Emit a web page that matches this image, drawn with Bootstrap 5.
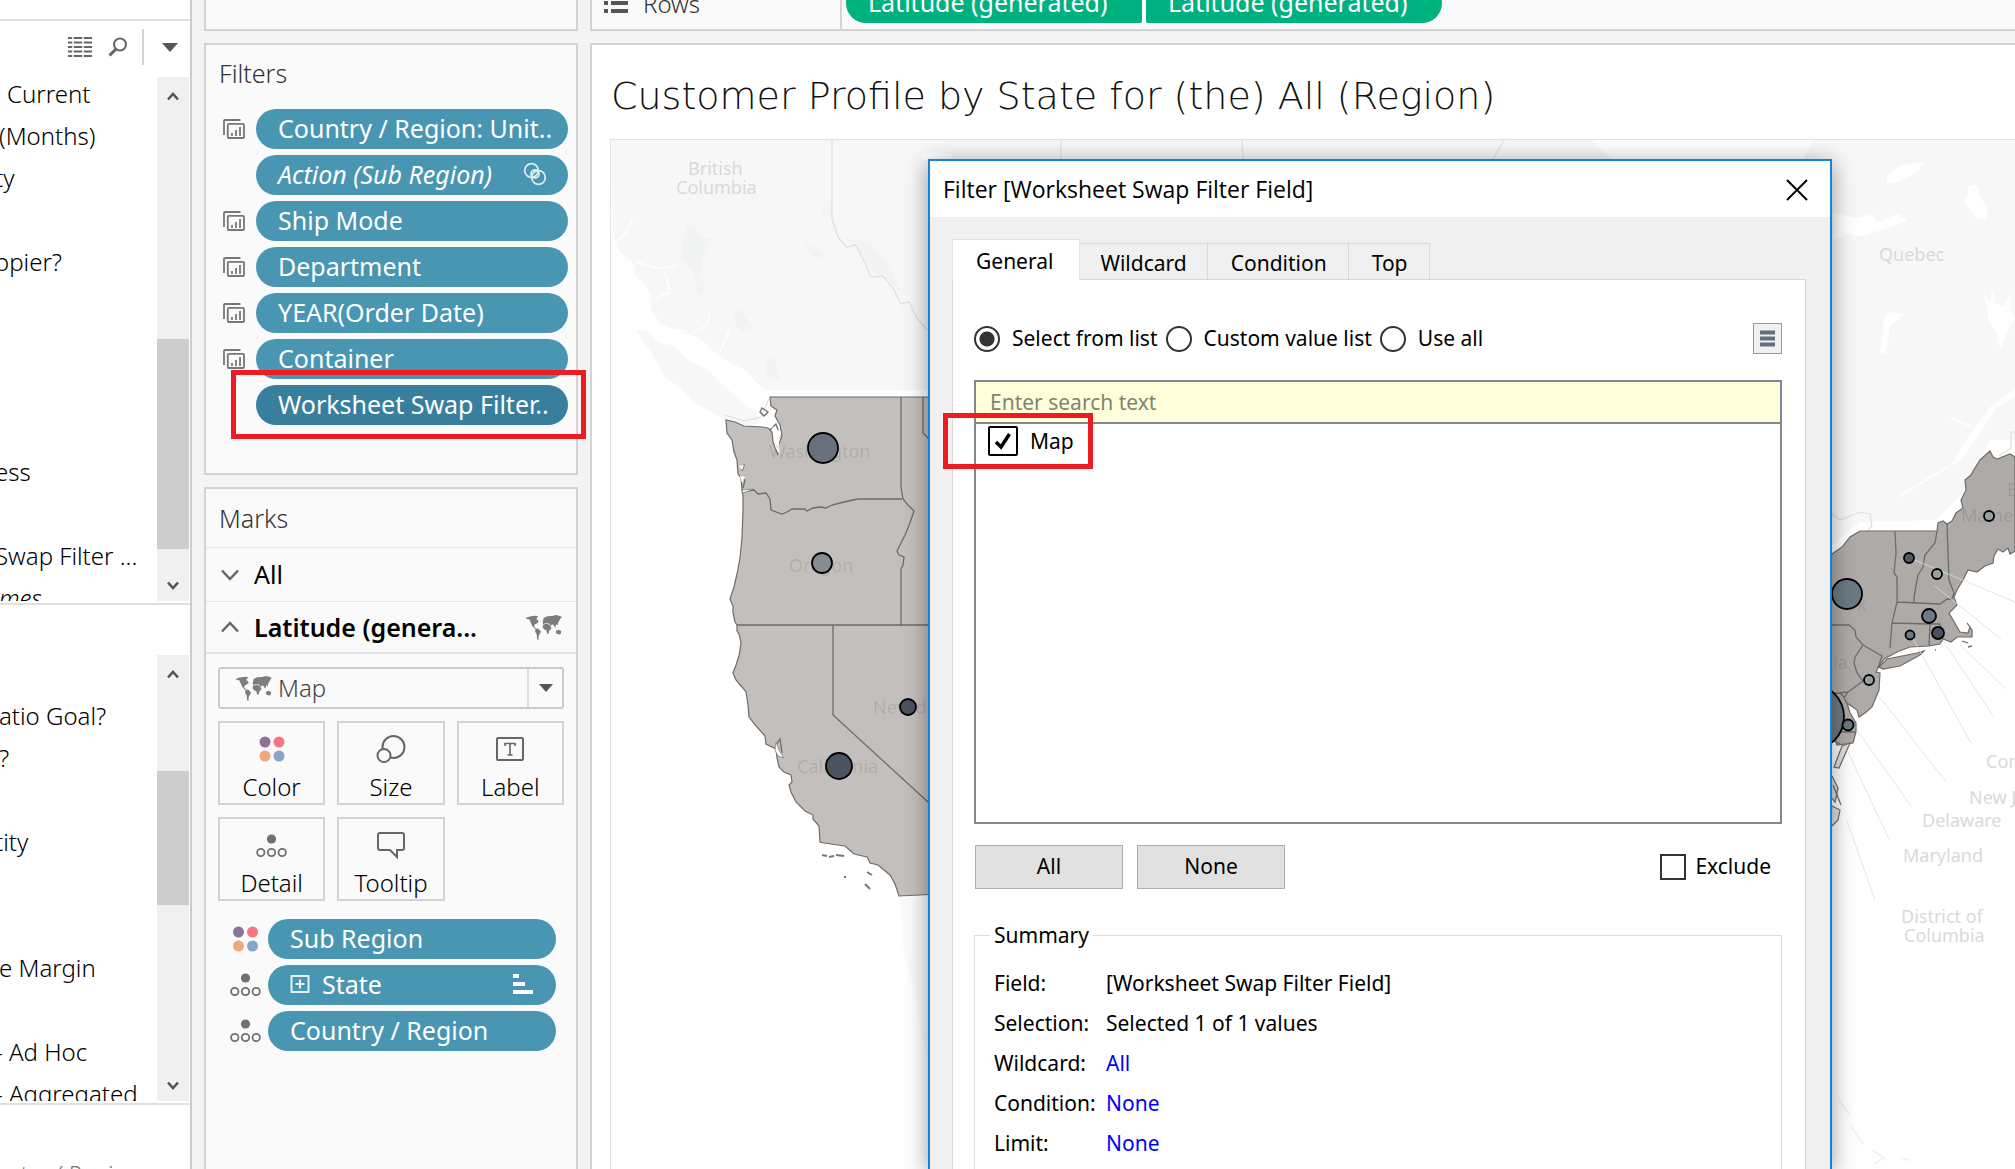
<!DOCTYPE html>
<html lang="en">
<head>
<meta charset="utf-8">
<meta name="viewport" content="width=device-width, initial-scale=1">
<title>Customer Profile - Worksheet</title>
<link href="https://cdn.jsdelivr.net/npm/bootstrap@5.3.0/dist/css/bootstrap.min.css" rel="stylesheet">
<style>
  body { font-family: "Noto Sans", "Open Sans", sans-serif; font-size: 24px; color: #000; background: #f4f4f4; }
  .workspace { height: 100vh; }

  /* data pane */
  .data-pane { width: 192px; background: #fff; border-right: 2px solid #ccc; }
  .pane-top { height: 21px; border-bottom: 2px solid #e0e0e0; }
  .pane-tools { height: 52px; padding: 8px 12px 8px 0; }
  .pane-tools .tool { color: #666; line-height: 0; }
  .tool-split { width: 2px; height: 36px; background: #d3d3d3; margin: 0 18px 0 14px; }
  .scroll-pane { height: 532px; border-bottom: 2px solid #e0e0e0; padding: 0 1px 2px 0; }
  .measures { height: 450px; margin-top: 50px; }
  .field-list { font-weight: 300; line-height: 42px; white-space: nowrap; margin: 0 0 0 -5px; }
  .measures .field-list { padding-top: 40px; }
  .field-list li { min-height: 42px; }
  .field-list .first-field { padding-left: 12px; }
  .track { width: 32px; background: #f0f0f0; color: #555; padding: 14px 0 10px; }
  .thumb-gap { flex: 0 0 238px; }
  .thumb { flex: 0 0 210px; background: #cdcdcd; }
  .measures .thumb-gap { flex-basis: 92px; }
  .measures .thumb { flex-basis: 134px; }
  .sets-list { padding-top: 48px; font-weight: 300; font-style: italic; color: #777; line-height: 42px; margin-left: -36px; }

  /* shelves */
  .shelves { width: 398px; padding: 0 12px; }
  .shelf { background: #fafafa; border: 2px solid #d3d3d3; }
  .shelf-top { height: 31px; border-top: 0; }
  .shelf-head { font-size: 25px; line-height: 54px; font-weight: 300; color: #333; padding-left: 13px; margin: 0; }
  .filter-shelf { margin-top: 12px; height: 432px; padding-top: 1px; }
  .pill-list { gap: 6px; }
  .pill-row { gap: 11px; }
  .pill-row > svg { flex: none; }
  .filter-shelf .pill-list { padding: 9px 8px 0 17px; }
  .pill { height: 40px; border: 0; border-radius: 20px; background: #4996b2; color: #fff; font-size: 25px; font-weight: 400; line-height: 38px; padding: 0 15px 2px 22px; text-align: left; white-space: nowrap; }
  .pill-wide-end { padding-right: 21px; }
  .pill-active { background: #387f9e; }
  .callout { position: absolute; border: 5px solid #ed1c24; pointer-events: none; }
  .callout-filter { left: 25px; right: -10px; top: 325px; height: 69px; }

  .marks-shelf { margin-top: 12px; border-bottom: 0; }
  .marks-shelf .shelf-head { line-height: 58px; border-bottom: 1px solid #e3e3e3; }
  .mark-layer { border: 0; border-bottom: 1px solid #e3e3e3; background: none; padding: 0 14px 0 15px; gap: 15px; font-size: 25px; font-weight: 400; line-height: 53px; text-align: left; }
  .mark-layer-on { font-weight: 600; line-height: 50px; border-bottom-width: 2px; }
  .mark-body { padding: 13px 12px 0 12px; }
  .mark-type { border: 2px solid #ccc; border-radius: 3px; height: 42px; padding-left: 16px; }
  .mark-type select { appearance: none; border: 0; background: none; color: #444; font-weight: 300; line-height: 34px; padding: 0 0 0 6px; outline: 0; }
  .mark-type .caret-cell { width: 35px; border-left: 2px solid #ddd; line-height: 0; }
  .mark-grid { display: grid; grid-template-columns: repeat(3, 1fr); gap: 12px; margin-top: 12px; }
  .mark-btn { height: 84px; border: 2px solid #d3d3d3; background: #fafafa; font-weight: 300; padding: 12px 0 0; line-height: 40px; }
  .mark-btn svg { display: block; margin: 0 auto 4px; }
  .mark-pills { padding: 18px 20px 0 24px; }
  .mark-pills .pill-row { gap: 7px; }
  .expand-box { margin-right: 12px; }

  /* rows shelf and sheet */
  .rows-shelf { height: 31px; border-right: 0; border-top: 0; padding-bottom: 6px; }
  .rows-label { width: 248px; padding-left: 12px; gap: 15px; font-weight: 300; color: #333; line-height: 37px; height: 40px; }
  .rows-wrap { border-left: 2px solid #d3d3d3; padding-left: 4px; gap: 4px; margin-bottom: -6px; padding-bottom: 6px; }
  .pill-green { background: #00b180; width: 296px; }
  .pill-first { border-radius: 20px 2px 2px 20px; }
  .pill-last { border-radius: 2px 20px 20px 2px; }
  .sheet { margin-top: 12px; background: #fff; border: 2px solid #d3d3d3; border-right: 0; border-bottom: 0; padding-left: 18px; }
  .sheet-title { font-family: "DejaVu Sans", sans-serif; font-size: 38px; font-weight: 200; line-height: 86px; color: #111; margin: 0; padding: 8px 0 0 1px; white-space: nowrap; }
  .map { display: block; width: 100%; height: auto; }
  .map-names text { font-size: 18px; fill: #d8dad9; }
  .map-names .on-state { fill: #000; fill-opacity: .11; }

  /* filter window */
  .filter-window { position: absolute; left: 928px; top: 159px; bottom: 0; width: 904px; border: 2px solid #1883d7; border-bottom: 0; background: #f0f0f0; box-shadow: 0 4px 22px rgba(0,0,0,.4); font-size: 21px; }
  .window-bar { height: 56px; background: #fff; padding: 2px 21px 0 13px; }
  .window-bar h2 { font-family: "Open Sans", sans-serif; font-size: 23px; font-weight: 400; margin: 0; }
  .window-bar button { border: 0; background: none; padding: 0; line-height: 0; }
  .window-body { padding: 22px 24px 0 22px; }
  .filter-tabs { border: 0; align-items: flex-end; }
  .filter-tabs .nav-link { border: 1px solid #d9d9d9; border-left-width: 0; border-radius: 0; background: #f0f0f0; color: #000; line-height: 35px; padding: 2px 20px 0; margin: 0; height: 37px; }
  .filter-tabs .nav-link.active { border-left-width: 1px; border-bottom: 0; background: #fff; height: 41px; line-height: 36px; padding: 2px 26px 0 23px; color: #000; position: relative; }
  .filter-tabs .tab-wide { padding-left: 23px; padding-right: 21px; }
  .tab-panel { background: #fff; border: 1px solid #d9d9d9; border-bottom: 0; margin-top: -1px; padding: 43px 23px 0 21px; }
  .choice { gap: 12px; margin-right: 8px; }
  .choice input { appearance: none; width: 26px; height: 26px; margin: 0; border: 2px solid #333; border-radius: 50%; background: #fff; }
  .choice input:checked { background: radial-gradient(circle, #333 7px, #fff 8px); }
  .menu-btn { width: 29px; height: 31px; border: 1px solid #999; background: #f0f0f0; padding: 0; line-height: 0; }
  .value-box { margin-top: 25px; border: 2px solid #828790; height: 444px; }
  .value-box .form-control { height: 42px; border: 0; border-bottom: 2px solid #828790; border-radius: 0; background: #ffffdb; font-size: 21px; padding: 0 14px; box-shadow: none; }
  .value-box .form-control::placeholder { color: #83836f; opacity: 1; }
  .value-item { padding: 2px 0 0 12px; gap: 12px; }
  .value-item input { appearance: none; width: 30px; height: 30px; margin: 0; border: 2px solid #000; border-radius: 2px; background: #fff; }
  .tick { position: absolute; left: 18px; top: 8px; pointer-events: none; }
  .callout-value { left: -33px; top: 31px; width: 150px; height: 56px; }
  .list-actions { margin-top: 21px; gap: 14px; padding-left: 1px; }
  .grey-btn { width: 148px; height: 44px; border: 1px solid #adadad; background: #e1e1e1; color: #000; padding: 0; }
  .exclude { gap: 9px; padding-right: 11px; }
  .exclude input { appearance: none; width: 26px; height: 26px; margin: 0; border: 2px solid #333; background: #fff; }
  .summary { border: 1px solid #dcdcdc; border-bottom: 0; margin-top: 33px; padding: 0 0 0 15px; }
  .summary legend { float: none; width: auto; font-size: 21px; line-height: 27px; margin: 0; padding: 0 4px; }
  .summary dl { display: grid; grid-template-columns: 112px 1fr; line-height: 40px; margin: 14px 0 0; padding-left: 4px; }
  .summary dt { font-weight: 400; }
  .summary dd { margin: 0; }
  .summary a { color: #00f; text-decoration: none; }
</style>
<script src="https://cdn.jsdelivr.net/npm/bootstrap@5.3.0/dist/js/bootstrap.bundle.min.js"></script>
</head>
<body class="overflow-hidden">

<svg width="0" height="0" class="position-absolute" aria-hidden="true">
  <symbol id="i-context" viewBox="0 0 22 20"><path d="M1 16V2q0-1 1-1h15.500" fill="none" stroke="#777" stroke-width="1.800"/><rect x="4.800" y="4.800" width="16.200" height="14.200" rx="1" fill="none" stroke="#777" stroke-width="1.800"/><path d="M9 17v-3M13 17v-6M17 17V8" stroke="#777" stroke-width="1.800"/></symbol>
  <symbol id="i-world" viewBox="0 0 108 76"><g fill="#7d7d7d"><path d="M0 8l8-3 12-2 10-1 6 2-3 5-3 3 5 3 3 6-6 5-6 3-2 6 7 6h-5l-8-8-5-12-4-8-9-1z"/><path d="M28 42l8-1 9 9-4 8-3 6-1 12-4-2-1-15-5-8z"/><path d="M51 18l2-9 11-5 14-1 14-3 16 5-5 8-6 10-1 8-5-3-3 11-6-9-4-2-3 6-6-8-10-2-7 4-2-5z"/><path d="M51 30l11-4 10 5 5 9-7 8-2 8-4 2-3-12-7-3-4-6z"/><path d="M90 49l8-4 8 4-1 9-6 1-8-3z"/></g></symbol>
  <symbol id="i-detail" viewBox="0 0 31 24"><circle cx="15.500" cy="5" r="4.600" fill="#707070"/><g fill="none" stroke="#707070" stroke-width="1.800"><circle cx="4.800" cy="18.500" r="3.700"/><circle cx="15.500" cy="18.500" r="3.700"/><circle cx="26.200" cy="18.500" r="3.700"/></g></symbol>
  <symbol id="i-color" viewBox="0 0 26 26"><circle cx="6" cy="6" r="5.500" fill="#8a7399"/><circle cx="20" cy="6" r="5.500" fill="#f87683"/><circle cx="6" cy="20" r="5.500" fill="#f1a77c"/><circle cx="20" cy="20" r="5.500" fill="#85a5cb"/></symbol>
  <symbol id="i-up" viewBox="0 0 12 10"><path d="M1 8.500L6 3l5 5.500" fill="none" stroke="#555" stroke-width="2.600"/></symbol>
  <symbol id="i-down" viewBox="0 0 12 10"><path d="M1 1.500L6 7l5-5.500" fill="none" stroke="#555" stroke-width="2.600"/></symbol>
</svg>

<div class="workspace d-flex overflow-hidden">

  <aside class="data-pane flex-shrink-0 overflow-hidden">
    <div class="pane-top"></div>
    <div class="pane-tools d-flex justify-content-end align-items-center">
      <span class="tool"><svg width="24" height="20"><path d="M0 1h24M0 5.500h24M0 10h24M0 14.500h24M0 19h24" stroke="#666" stroke-width="2" fill="none"/><path d="M5 0v20M15 0v20" stroke="#fff" stroke-width="1.500"/></svg></span>
      <span class="tool ms-3"><svg width="20" height="20"><circle cx="12" cy="7.500" r="6" fill="none" stroke="#666" stroke-width="2"/><path d="M8 12L1.500 18.500" stroke="#666" stroke-width="3"/></svg></span>
      <span class="tool-split"></span>
      <span class="tool"><svg width="16" height="9"><path d="M0 0h16L8 9z" fill="#555"/></svg></span>
    </div>

    <section class="scroll-pane d-flex" aria-label="Dimensions">
      <ul class="field-list list-unstyled flex-grow-1 overflow-hidden">
        <li class="first-field">Current</li>
        <li class="ps-1">(Months)</li>
        <li>ty</li>
        <li></li>
        <li>opier?</li>
        <li></li><li></li><li></li><li></li>
        <li>ess</li>
        <li></li>
        <li>Swap Filter ...</li>
        <li class="fst-italic ps-1">mes</li>
      </ul>
      <div class="track d-flex flex-column align-items-center flex-shrink-0 mt-1">
        <svg width="12" height="10"><use href="#i-up"/></svg>
        <div class="thumb-gap"></div><div class="thumb w-100"></div>
        <svg class="mt-auto" width="12" height="10"><use href="#i-down"/></svg>
      </div>
    </section>

    <section class="scroll-pane measures d-flex" aria-label="Measures">
      <ul class="field-list list-unstyled flex-grow-1 overflow-hidden">
        <li class="ps-1">atio Goal?</li>
        <li class="ps-1">?</li>
        <li></li>
        <li>tity</li>
        <li></li><li></li>
        <li class="ps-1">e Margin</li>
        <li></li>
        <li>- Ad Hoc</li>
        <li>- Aggregated</li>
      </ul>
      <div class="track d-flex flex-column align-items-center flex-shrink-0">
        <svg width="12" height="10"><use href="#i-up"/></svg>
        <div class="thumb-gap flex-shrink-0"></div><div class="thumb w-100"></div>
        <svg class="mt-auto" width="12" height="10"><use href="#i-down"/></svg>
      </div>
    </section>
    <div class="sets-list text-nowrap">Country / Region</div>
  </aside>

  <div class="shelves flex-shrink-0 d-flex flex-column">
    <div class="shelf shelf-top flex-shrink-0"></div>

    <section class="shelf filter-shelf position-relative flex-shrink-0">
      <h2 class="shelf-head">Filters</h2>
      <div class="pill-list d-flex flex-column">
        <div class="pill-row d-flex align-items-center"><svg width="22" height="20"><use href="#i-context"/></svg><button class="pill flex-grow-1">Country / Region: Unit..</button></div>
        <div class="pill-row d-flex align-items-center"><svg width="22" height="20"></svg><button class="pill pill-wide-end flex-grow-1 d-flex justify-content-between align-items-center"><em>Action (Sub Region)</em><svg width="24" height="24" fill="none" stroke="#dcebf1" stroke-width="1.800"><circle cx="8.500" cy="8.500" r="6.800"/><circle cx="15.500" cy="15.500" r="6.800"/><circle cx="12" cy="12" r="4"/></svg></button></div>
        <div class="pill-row d-flex align-items-center"><svg width="22" height="20"><use href="#i-context"/></svg><button class="pill flex-grow-1">Ship Mode</button></div>
        <div class="pill-row d-flex align-items-center"><svg width="22" height="20"><use href="#i-context"/></svg><button class="pill flex-grow-1">Department</button></div>
        <div class="pill-row d-flex align-items-center"><svg width="22" height="20"><use href="#i-context"/></svg><button class="pill flex-grow-1">YEAR(Order Date)</button></div>
        <div class="pill-row d-flex align-items-center"><svg width="22" height="20"><use href="#i-context"/></svg><button class="pill flex-grow-1">Container</button></div>
        <div class="pill-row d-flex align-items-center"><svg width="22" height="20"></svg><button class="pill pill-active flex-grow-1">Worksheet Swap Filter..</button></div>
      </div>
      <div class="callout callout-filter"></div>
    </section>

    <section class="shelf marks-shelf flex-grow-1">
      <h2 class="shelf-head">Marks</h2>
      <button class="mark-layer w-100 d-flex align-items-center"><svg width="18" height="12" fill="none" stroke="#666" stroke-width="2.500"><path d="M1 1.500l8 8.500 8-8.500"/></svg>All</button>
      <button class="mark-layer mark-layer-on w-100 d-flex align-items-center"><svg width="18" height="12" fill="none" stroke="#666" stroke-width="2.500"><path d="M1 10.500L9 2l8 8.500"/></svg>Latitude (genera...<svg class="ms-auto" width="36" height="25"><use href="#i-world"/></svg></button>
      <div class="mark-body">
        <div class="mark-type d-flex align-items-center">
          <svg class="flex-shrink-0" width="36" height="25"><use href="#i-world"/></svg>
          <select class="flex-grow-1" aria-label="Mark type"><option>Map</option></select>
          <span class="caret-cell h-100 d-flex align-items-center justify-content-center"><svg width="14" height="8"><path d="M0 0h14L7 8z" fill="#555"/></svg></span>
        </div>
        <div class="mark-grid">
          <button class="mark-btn"><svg width="26" height="28"><use href="#i-color"/></svg>Color</button>
          <button class="mark-btn"><svg width="30" height="28" fill="none" stroke="#666" stroke-width="2"><circle cx="17.500" cy="12" r="11"/><circle cx="8" cy="20.500" r="6.500" fill="#fafafa"/></svg>Size</button>
          <button class="mark-btn"><svg width="28" height="28"><rect x="1" y="3" width="26" height="22" rx="1" fill="none" stroke="#666" stroke-width="2"/><path d="M9 11V8.500h10V11M14 8.500V20M11.500 20h5" fill="none" stroke="#666" stroke-width="1.600"/></svg>Label</button>
          <button class="mark-btn"><svg width="31" height="28" viewBox="0 -3 31 28"><use href="#i-detail" width="31" height="24"/></svg>Detail</button>
          <button class="mark-btn"><svg width="28" height="28" fill="none" stroke="#666" stroke-width="2"><path d="M3 2h22q2 0 2 2v13q0 2-2 2h-5v7l-7-7H3q-2 0-2-2V4q0-2 2-2z"/></svg>Tooltip</button>
        </div>
      </div>
      <div class="mark-pills pill-list d-flex flex-column">
        <div class="pill-row d-flex align-items-center"><svg width="31" height="26"><use href="#i-color"/></svg><button class="pill flex-grow-1">Sub Region</button></div>
        <div class="pill-row d-flex align-items-center"><svg width="31" height="24"><use href="#i-detail"/></svg><button class="pill pill-wide-end flex-grow-1 d-flex align-items-center"><svg width="20" height="20" class="expand-box" fill="none" stroke="#e6f1f5" stroke-width="2"><path d="M1.500 2h17v16h-17zM10 5.500v9M5.500 10h9"/></svg>State<svg width="22" height="22" class="ms-auto" stroke="#fff" stroke-width="4"><path d="M0 3h6M0 11h12M0 19h20"/></svg></button></div>
        <div class="pill-row d-flex align-items-center"><svg width="31" height="24"><use href="#i-detail"/></svg><button class="pill flex-grow-1">Country / Region</button></div>
      </div>
    </section>
  </div>

  <main class="flex-grow-1 d-flex flex-column overflow-hidden">
    <div class="shelf rows-shelf d-flex align-items-end flex-shrink-0">
      <div class="rows-label d-flex align-items-center flex-shrink-0"><svg width="24" height="20" stroke="#555" stroke-width="4"><path d="M0 2h4M7 2h17M0 10h4M7 10h17M0 18h4M7 18h17"/></svg>Rows</div>
      <div class="rows-wrap d-flex">
        <button class="pill pill-green pill-first">Latitude (generated)</button>
        <button class="pill pill-green pill-last">Latitude (generated)</button>
      </div>
    </div>

    <div class="sheet flex-grow-1 overflow-hidden">
      <h1 class="sheet-title">Customer Profile by State for (the) All (Region)</h1>
      <svg class="map" viewBox="610 139 1405 1030" role="img" aria-label="Map of customers by state">
        <rect x="610" y="139" width="1405" height="1030" fill="#fff"/>
        <!-- Canada and Baja California -->
        <g fill="#f7f7f7">
          <path d="M612 140H2015V440L1990 440 1965 490 1936 520 1860 522 1832 545 1800 390H770L762 388 745 370 728 362 712 350 700 338 680 332 662 325 652 313 650 295 643 282 636 277 632 262 620 252 613 235z"/>
          <path d="M636 330l12 2 10 10 16 4 14 14 20 10 16 16 18 16 14 10 4 10-8 4-14-3-16-4-14-9-14-8-14-14-16-12-8-16z"/>
        </g>
        <path d="M900 899l28-3v160l-8-30-6-40-10-30z" fill="#fbfbfb"/>
        <!-- parks -->
        <g fill="#f2f4f3">
          <path d="M686 224l10 2 4 12 14 0-10 16-4 20 6 18-8 2-6-24-12-12zM845 238l24 4 20 24 14 28-16-14-12-6-16-22zM735 308l8 4 10 16-10 4-8-8zM802 240l16 8 8 12-14-4zM820 206l12 2v10l-10-2zM767 355l8 2 6 24-14-4z"/>
        </g>
        <g fill="none" stroke="#fff" stroke-width="1.500">
          <path d="M633 218l-6 14-12 12M636 262l20 6 20-2M652 300l18-8-6-22M690 334l16-8 4-12M720 352l10-24M650 318l12 10 26 4"/>
          <path d="M694 345l20 12 18 20 16 12 20 14" stroke-width="5"/>
        </g>
        <g fill="none" stroke="#dedfdf" stroke-width="1.200">
          <path d="M832 140v79l6 18 9 10 9-2 9 18 6 14 12-1 10 12 8 16 8-2 8 16 10 12M1061 140v20M1242 140l1 20M1504 140l-14 24M725 415l20 6 16-4 8-18M1832 514l8 6 20-8 10 2 2 12-8 8M2015 432h-4v16l-12 8"/>
          <path d="M610 139.500H2015M610.500 139v1030" stroke="#e3e3e3"/>
        </g>
        <!-- bays and lakes -->
        <g fill="#fff">
          <path d="M1591 140h222l-12 24h-182l-15-12zM922 154l16-2 14 2-2 6h-26zM1887 176l12-10 26-4-8 10-18 10-12 2zM1968 186l8-2 6 16 6 10-2 10-10-2-12-16 4-6zM1833 212l22 6 18-4 4 8 22-8 8 6-12 6-34 10-14-2-14 6zM1880 352l4-34 4-6 16 2-14 12-4 28z"/>
          <path d="M1984 292l6 12 2-14 4 14 8 2 8-14-2 16 5 10-8 14-6 18-6-20-6-8z"/>
          <path d="M2015 396l-20 14-14 22-22 30-8 4 4-8 22-34 14-18 24-18z"/>
        </g>
        <path d="M1951 418l20 8M1950 466l-24 14-26 16" fill="none" stroke="#fff" stroke-width="2"/>
        <path d="M1839 1100l10 14M1850 1125l14 20M1872 1150l12 8-10 6M1900 1158l10 2" fill="none" stroke="#f2f2f2" stroke-width="2"/>

        <!-- western states -->
        <path d="M770 397H940V894L899 896 895 884 890 875 884 870 878 865 870 863 867 857 854 854 845 846 824 843 820 842 819 826 813 819 813 815 805 811 796 802 791 792 789 785 792 782 791 775 784 772 779 767 777 758 776 749 766 744 765 736 757 727 749 717 748 705 746 692 742 687 736 680 733 673 736 665 739 656 740 650 741 642 739 634 737 631 737 625 735 622 733 613 733 606 730 599 734 587 737 574 740 558 742 538 743 510 743 496 742 490 741 478 738 474 737 460 734 452 732 440 727 433 726 420 735 422 744 426 762 427 768 428 772 432 773 442 778 455 779 444 782 436 780 425 775 416 777 410 771 406z" fill="#c3bfbc" stroke="#6e6c6a" stroke-width="1.200"/>
        <g fill="none" stroke="#6e6c6a" stroke-width="1.300">
          <path d="M742 492l12-2 4 4 8-1 4 6 1 11 11 4 5-2 5-3h13l2 2 6-3 7-1 6 1 6-3 12-3 14-3h44"/>
          <path d="M901 397v90l2 12 5 6 6 6-2 6-4 11-3 7-3 6-5 10 2 4 5 2-1 8-2 4v57M737 625h203M833 625v90l107 98M923 397v36l8 8"/>
          <path d="M770 430l6-6 4 12-4 8M740 467l4-2-2 6M741 478l4 2-2 8M776 745l4-6 2 14M762 408l6 4-4 4-4-4z"/>
        </g>
        <path d="M776 742l3 8 5 8-6-2-3-6zM742 490l12-1-11 4z" fill="#fff" stroke="#777" stroke-width=".7"/>
        <path d="M771 426l6 8-2 12 5 10-1-14 2-10zM739 466l5-1-2 5zM740 476l5 1-3 6z" fill="#fff"/>
        <path d="M822 855l5 1M829 857l5-1M836 855l8 1M867 872l5 3M865 884l5 5M844 877h2" stroke="#777" stroke-width="2"/>

        <!-- north-eastern states -->
        <g fill="#aeaaa8" stroke="#6e6c6a" stroke-width="1.200">
          <path d="M1820 560L1832 554 1842 547 1850 537 1860 531H1937L1938 523 1943 521 1947 524 1952 521 1956 513 1963 508 1961 500 1966 490 1965 480 1971 475 1972 473 1980 460 1990 451 1993 457 1997 459 2010 454 2015 457V551L2010 554 2008 548 2003 552 1998 549 1994 556 1993 563 1985 566 1977 572 1968 570 1963 580 1957 590 1954 597 1957 605 1949 613 1953 620 1960 632 1968 633 1970 627 1967 623 1972 630 1972 637 1957 637 1951 642 1943 639 1940 644 1929 646 1910 647 1897 652 1884 659 1878 668 1876 672 1880 673 1879 690 1872 707 1865 713 1859 717 1857 710 1847 703 1850 713 1856 723 1856 732 1853 743 1837 745 1835 740 1820 742z"/>
          <path d="M1879 667l8-8 30-6 7-2-4 4-20 11-17 3z"/>
          <path d="M1842 746l8-3-11 25-5-1zM1832 776l6 12-3 14-3-4M1832 806l8 4-2 10-6 6" fill="#e3e1df"/>
        </g>
        <g fill="none" stroke="#6e6c6a" stroke-width="1.300">
          <path d="M1895 531l1 22-2 20 3 4v25l-5 21-2 25M1937 531l-2 12-10 12-2 12-5 8-4 22v6M1947 524l2 56 5 13-2 6-5 0-7 5-43-2M1892 623l38 1h10l3 14M1930 624l-1 22M1820 625h29l6 5 1 7 7 8 19 11-4 12M1863 645l-8 12-1 6 3 10 6 8-15 11-8 1-20 1M1840 693l4 4M1848 692l-4 6 3 5M1832 732h24M1832 740l8 4M1833 785l8 20"/>
          <path d="M1962 641l6 2M1968 647l4-1M1935 650h1"/>
        </g>
        <g stroke="#dfdfdf" stroke-width="1" opacity=".8">
          <path d="M1910 558l105 44M1935 586l66 53M1960 645l46 44M1943 640l50 76M1912 637l59 106M1878 695l68 87M1857 730l54 76M1847 750l42 89M1847 821l28 79"/>
        </g>
        <g class="map-names">
          <text x="688" y="175">British</text><text x="676" y="194">Columbia</text>
          <text x="1879" y="261">Quebec</text>
          <text x="1986" y="768">Connecticut</text><text x="1969" y="804">New Jersey</text>
          <text x="1922" y="827">Delaware</text><text x="1903" y="862">Maryland</text>
          <text x="1901" y="923">District of</text><text x="1904" y="942">Columbia</text>
          <text class="on-state" x="769" y="458">Washington</text><text class="on-state" x="789" y="572">Oregon</text>
          <text class="on-state" x="873" y="714">Nevada</text><text class="on-state" x="797" y="773">California</text>
          <text class="on-state" x="1961" y="522">Maine</text><text class="on-state" x="2007" y="496">Bangor</text>
          <text class="on-state" x="1833" y="669">ia</text><text class="on-state" x="1857" y="611">k</text>
        </g>
        <g stroke="#000" stroke-width="1.800">
          <circle cx="823" cy="448" r="15" fill="#68717b"/><circle cx="822" cy="563" r="10" fill="#868d93"/>
          <circle cx="908" cy="707" r="8" fill="#4a5263"/><circle cx="839" cy="766" r="13" fill="#4a545f"/>
          <circle cx="1847" cy="594" r="15" fill="#6c7a83"/><circle cx="1909" cy="558" r="5" fill="#4e5866"/>
          <circle cx="1937" cy="574" r="5" fill="#96a0a0"/><circle cx="1989" cy="516" r="5" fill="#96a0a0"/>
          <circle cx="1929" cy="616" r="7" fill="#6c7a83"/><circle cx="1910" cy="635" r="4.500" fill="#6c7a83"/>
          <circle cx="1938" cy="633" r="6" fill="#4a5262"/><circle cx="1869" cy="680" r="5" fill="#96a0a0"/>
          <circle cx="1811" cy="717" r="33" fill="#6c7a83"/><circle cx="1848" cy="725" r="5.500" fill="#6c7a83"/>
        </g>
      </svg>
    </div>
  </main>
</div>

<div class="filter-window d-flex flex-column" role="dialog" aria-labelledby="windowTitle">
  <div class="window-bar d-flex align-items-center justify-content-between flex-shrink-0">
    <h2 id="windowTitle">Filter [Worksheet Swap Filter Field]</h2>
    <button aria-label="Close"><svg width="24" height="22" stroke="#000" stroke-width="2"><path d="M2 1l20 20M22 1L2 21"/></svg></button>
  </div>
  <div class="window-body d-flex flex-column flex-grow-1">
    <ul class="nav nav-tabs filter-tabs">
      <li class="nav-item"><button class="nav-link active">General</button></li>
      <li class="nav-item"><button class="nav-link">Wildcard</button></li>
      <li class="nav-item"><button class="nav-link tab-wide">Condition</button></li>
      <li class="nav-item"><button class="nav-link tab-wide">Top</button></li>
    </ul>
    <div class="tab-panel d-flex flex-column flex-grow-1">
      <div class="d-flex align-items-center">
        <label class="choice d-flex align-items-center"><input type="radio" name="mode" checked>Select from list</label>
        <label class="choice d-flex align-items-center"><input type="radio" name="mode">Custom value list</label>
        <label class="choice d-flex align-items-center"><input type="radio" name="mode">Use all</label>
        <button class="menu-btn ms-auto" aria-label="List options"><svg width="15" height="17" stroke="#64707f" stroke-width="4"><path d="M0 2.500h15M0 8.500h15M0 14.500h15"/></svg></button>
      </div>
      <div class="value-box position-relative">
        <input class="form-control" type="text" placeholder="Enter search text" aria-label="Enter search text">
        <div class="position-relative">
          <label class="value-item d-flex align-items-center"><input type="checkbox" checked>Map</label>
          <svg class="tick" width="18" height="18" fill="none" stroke="#000" stroke-width="3.500"><path d="M2 10l5 5L15.500 2"/></svg>
        </div>
        <div class="callout callout-value"></div>
      </div>
      <div class="list-actions d-flex align-items-center">
        <button class="grey-btn">All</button>
        <button class="grey-btn">None</button>
        <label class="exclude d-flex align-items-center ms-auto"><input type="checkbox">Exclude</label>
      </div>
      <fieldset class="summary flex-grow-1">
        <legend>Summary</legend>
        <dl>
          <dt>Field:</dt><dd>[Worksheet Swap Filter Field]</dd>
          <dt>Selection:</dt><dd>Selected 1 of 1 values</dd>
          <dt>Wildcard:</dt><dd><a href="#">All</a></dd>
          <dt>Condition:</dt><dd><a href="#">None</a></dd>
          <dt>Limit:</dt><dd><a href="#">None</a></dd>
        </dl>
      </fieldset>
    </div>
  </div>
</div>
</body>
</html>
